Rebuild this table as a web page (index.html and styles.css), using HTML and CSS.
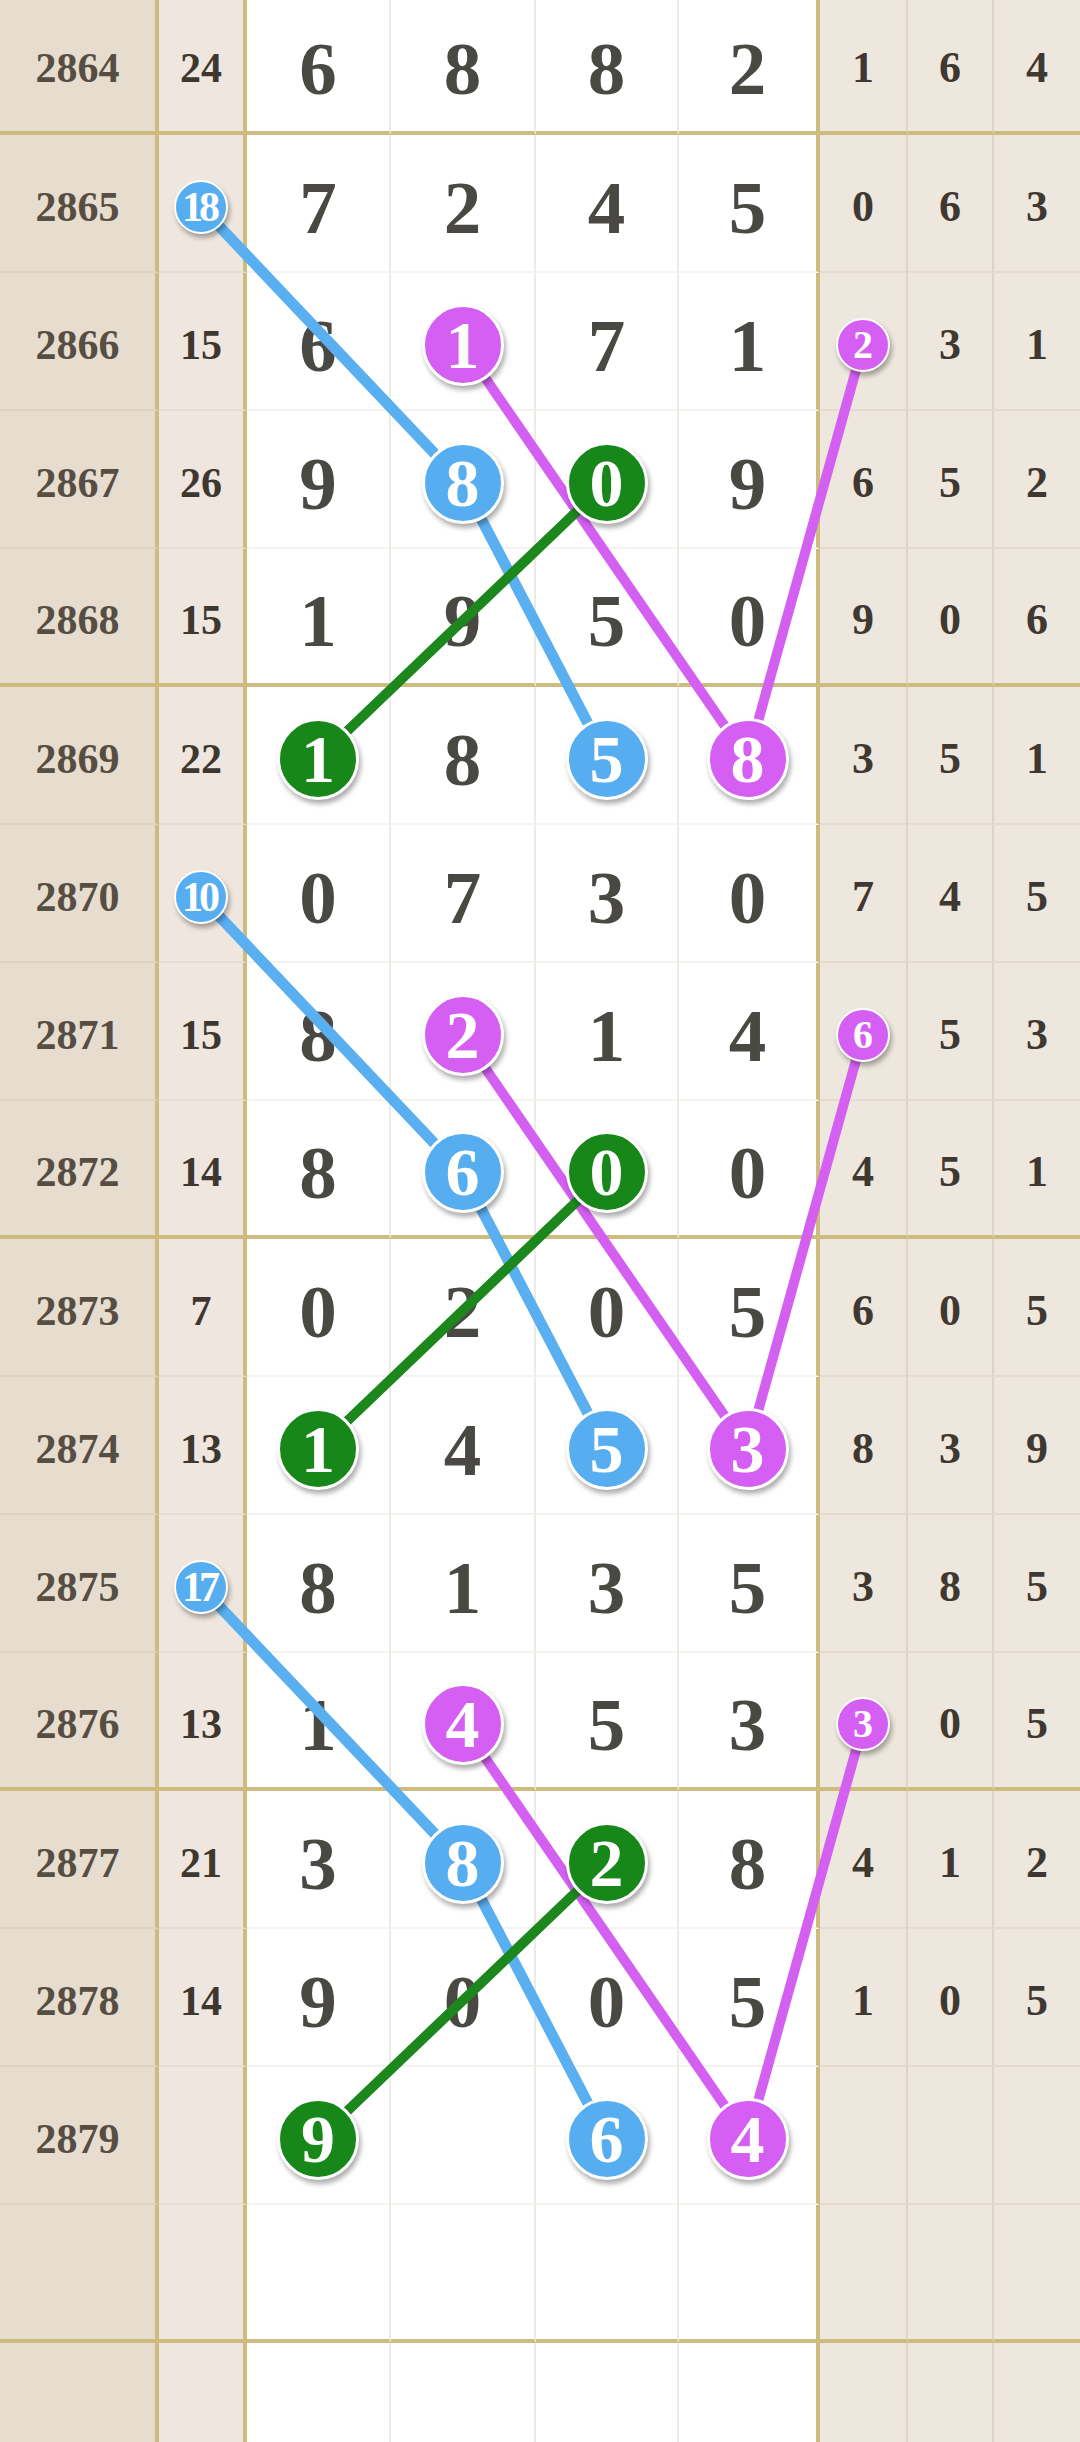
FILE: index.html
```html
<!DOCTYPE html>
<html lang="zh">
<head>
<meta charset="utf-8">
<title>走势图</title>
<link rel="stylesheet" href="styles.css">
</head>
<body>
<div class="board">
  <svg class="lines" width="1080" height="2484" viewBox="0 0 1080 2484" aria-hidden="true">
    <g fill="none" stroke-linecap="round" stroke-linejoin="round">
      <polyline class="ln-blue" points="201,210 462.5,486 606.5,762"/>
      <polyline class="ln-purple" points="462.5,348 747.5,762 863,348"/>
      <polyline class="ln-green" points="606.5,486 318,762"/>
      <polyline class="ln-blue" points="201,900 462.5,1176 606.5,1452"/>
      <polyline class="ln-purple" points="462.5,1038 747.5,1452 863,1038"/>
      <polyline class="ln-green" points="606.5,1176 318,1452"/>
      <polyline class="ln-blue" points="201,1590 462.5,1866 606.5,2142"/>
      <polyline class="ln-purple" points="462.5,1728 747.5,2142 863,1728"/>
      <polyline class="ln-green" points="606.5,1866 318,2142"/>
    </g>
  </svg>

  <div class="row gold">
    <div class="c per">2864</div><div class="c sum">24</div>
    <div class="c d">6</div><div class="c d">8</div><div class="c d">8</div><div class="c d last">2</div>
    <div class="c r">1</div><div class="c r">6</div><div class="c r last">4</div>
  </div>
  <div class="row">
    <div class="c per">2865</div><div class="c sum"><span class="ball sm blue">18</span></div>
    <div class="c d">7</div><div class="c d">2</div><div class="c d">4</div><div class="c d last">5</div>
    <div class="c r">0</div><div class="c r">6</div><div class="c r last">3</div>
  </div>
  <div class="row">
    <div class="c per">2866</div><div class="c sum">15</div>
    <div class="c d">6</div><div class="c d"><span class="ball big purple">1</span></div><div class="c d">7</div><div class="c d last">1</div>
    <div class="c r"><span class="ball rs purple">2</span></div><div class="c r">3</div><div class="c r last">1</div>
  </div>
  <div class="row">
    <div class="c per">2867</div><div class="c sum">26</div>
    <div class="c d">9</div><div class="c d"><span class="ball big blue">8</span></div><div class="c d"><span class="ball big green">0</span></div><div class="c d last">9</div>
    <div class="c r">6</div><div class="c r">5</div><div class="c r last">2</div>
  </div>
  <div class="row gold">
    <div class="c per">2868</div><div class="c sum">15</div>
    <div class="c d">1</div><div class="c d">9</div><div class="c d">5</div><div class="c d last">0</div>
    <div class="c r">9</div><div class="c r">0</div><div class="c r last">6</div>
  </div>
  <div class="row">
    <div class="c per">2869</div><div class="c sum">22</div>
    <div class="c d"><span class="ball big green">1</span></div><div class="c d">8</div><div class="c d"><span class="ball big blue">5</span></div><div class="c d last"><span class="ball big purple">8</span></div>
    <div class="c r">3</div><div class="c r">5</div><div class="c r last">1</div>
  </div>
  <div class="row">
    <div class="c per">2870</div><div class="c sum"><span class="ball sm blue">10</span></div>
    <div class="c d">0</div><div class="c d">7</div><div class="c d">3</div><div class="c d last">0</div>
    <div class="c r">7</div><div class="c r">4</div><div class="c r last">5</div>
  </div>
  <div class="row">
    <div class="c per">2871</div><div class="c sum">15</div>
    <div class="c d">8</div><div class="c d"><span class="ball big purple">2</span></div><div class="c d">1</div><div class="c d last">4</div>
    <div class="c r"><span class="ball rs purple">6</span></div><div class="c r">5</div><div class="c r last">3</div>
  </div>
  <div class="row gold">
    <div class="c per">2872</div><div class="c sum">14</div>
    <div class="c d">8</div><div class="c d"><span class="ball big blue">6</span></div><div class="c d"><span class="ball big green">0</span></div><div class="c d last">0</div>
    <div class="c r">4</div><div class="c r">5</div><div class="c r last">1</div>
  </div>
  <div class="row">
    <div class="c per">2873</div><div class="c sum">7</div>
    <div class="c d">0</div><div class="c d">2</div><div class="c d">0</div><div class="c d last">5</div>
    <div class="c r">6</div><div class="c r">0</div><div class="c r last">5</div>
  </div>
  <div class="row">
    <div class="c per">2874</div><div class="c sum">13</div>
    <div class="c d"><span class="ball big green">1</span></div><div class="c d">4</div><div class="c d"><span class="ball big blue">5</span></div><div class="c d last"><span class="ball big purple">3</span></div>
    <div class="c r">8</div><div class="c r">3</div><div class="c r last">9</div>
  </div>
  <div class="row">
    <div class="c per">2875</div><div class="c sum"><span class="ball sm blue">17</span></div>
    <div class="c d">8</div><div class="c d">1</div><div class="c d">3</div><div class="c d last">5</div>
    <div class="c r">3</div><div class="c r">8</div><div class="c r last">5</div>
  </div>
  <div class="row gold">
    <div class="c per">2876</div><div class="c sum">13</div>
    <div class="c d">1</div><div class="c d"><span class="ball big purple">4</span></div><div class="c d">5</div><div class="c d last">3</div>
    <div class="c r"><span class="ball rs purple">3</span></div><div class="c r">0</div><div class="c r last">5</div>
  </div>
  <div class="row">
    <div class="c per">2877</div><div class="c sum">21</div>
    <div class="c d">3</div><div class="c d"><span class="ball big blue">8</span></div><div class="c d"><span class="ball big green">2</span></div><div class="c d last">8</div>
    <div class="c r">4</div><div class="c r">1</div><div class="c r last">2</div>
  </div>
  <div class="row">
    <div class="c per">2878</div><div class="c sum">14</div>
    <div class="c d">9</div><div class="c d">0</div><div class="c d">0</div><div class="c d last">5</div>
    <div class="c r">1</div><div class="c r">0</div><div class="c r last">5</div>
  </div>
  <div class="row">
    <div class="c per">2879</div><div class="c sum"></div>
    <div class="c d"><span class="ball big green">9</span></div><div class="c d"></div><div class="c d"><span class="ball big blue">6</span></div><div class="c d last"><span class="ball big purple">4</span></div>
    <div class="c r"></div><div class="c r"></div><div class="c r last"></div>
  </div>
  <div class="row gold">
    <div class="c per"></div><div class="c sum"></div>
    <div class="c d"></div><div class="c d"></div><div class="c d"></div><div class="c d last"></div>
    <div class="c r"></div><div class="c r"></div><div class="c r last"></div>
  </div>
  <div class="row">
    <div class="c per"></div><div class="c sum"></div>
    <div class="c d"></div><div class="c d"></div><div class="c d"></div><div class="c d last"></div>
    <div class="c r"></div><div class="c r"></div><div class="c r last"></div>
  </div>
</div>
</body>
</html>
```

FILE: styles.css
```css
html, body {
  margin: 0;
  padding: 0;
  overflow: hidden;
  background: #ffffff;
}

.board {
  position: relative;
  width: 1080px;
  margin-top: -3px;
  font-family: "Liberation Serif", "Times New Roman", serif;
  font-weight: bold;
}

.lines {
  position: absolute;
  top: 0;
  left: 0;
  z-index: 1;
  pointer-events: none;
}

.ln-blue { stroke: #5aaff0; stroke-width: 11; }
.ln-purple { stroke: #d460f2; stroke-width: 10; }
.ln-green { stroke: #1c871c; stroke-width: 10; }

.row {
  display: grid;
  grid-template-columns: 159px 88px 144px 145px 143px 141px 88px 86px 86px;
  height: 138px;
}

.c {
  box-sizing: border-box;
  display: flex;
  align-items: center;
  justify-content: center;
  padding-top: 8px;
  line-height: 1;
  border-bottom: 2px solid rgba(120, 100, 60, 0.08);
}

.row.gold .c {
  border-bottom: 4px solid #cdbc7d;
}

.per {
  background: #e7ddcf;
  border-right: 4px solid #cdbc7d;
  font-size: 42px;
  color: #564e43;
}

.sum {
  background: #efe7df;
  border-right: 4px solid #cdbc7d;
  font-size: 42px;
  color: #3d372f;
}

.d {
  background: #ffffff;
  border-right: 2px solid #ecebe4;
  font-size: 75px;
  color: #4a4843;
}

.d.last {
  border-right: 4px solid #cdbc7d;
}

.r {
  background: #eee7dd;
  border-right: 2px solid #ddd4c6;
  font-size: 44px;
  color: #3e3831;
}

.r.last {
  border-right: none;
}

.ball {
  position: relative;
  z-index: 2;
  display: flex;
  align-items: center;
  justify-content: center;
  box-sizing: border-box;
  border-radius: 50%;
  border: 3px solid #ffffff;
  color: #ffffff;
  box-shadow: 2px 4px 5px rgba(0, 0, 0, 0.32);
  line-height: 1;
}

.ball.big {
  width: 82px;
  height: 82px;
  font-size: 68px;
}

.ball.sm {
  width: 54px;
  height: 54px;
  font-size: 42px;
  letter-spacing: -4px;
  text-indent: -4px;
  border-width: 2px;
}

.ball.rs {
  width: 54px;
  height: 54px;
  font-size: 40px;
  border-width: 2px;
}

.blue { background: #56adf0; }
.purple { background: #d55ef3; }
.green { background: #17871a; }
```
